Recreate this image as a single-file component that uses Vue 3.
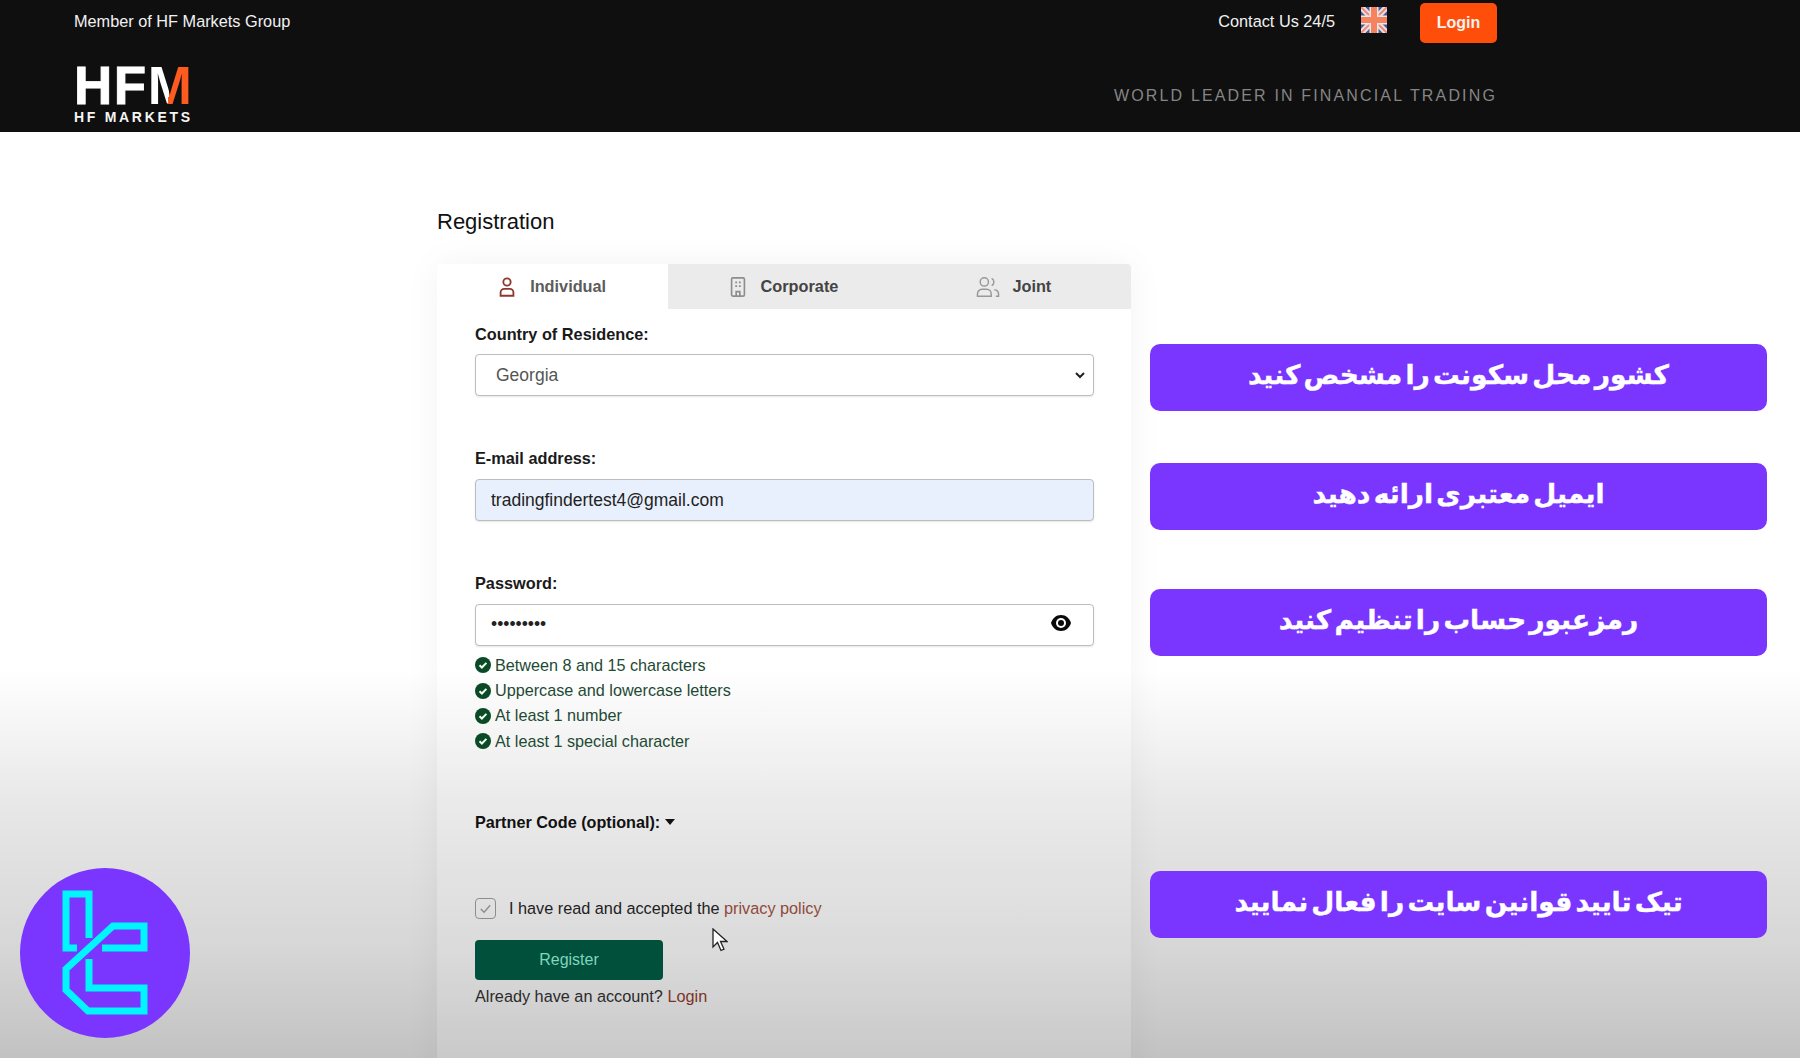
<template>
  <div class="page">
    <header class="topbar">
      <div class="topbar-row">
        <span class="member">Member of HF Markets Group</span>
        <div class="topbar-links">
          <span class="contact">Contact Us 24/5</span>
          <svg class="flag" viewBox="0 0 26 26">
            <rect width="26" height="26" rx="3" fill="#4a5a94" />
            <path d="M0 0L26 26M26 0L0 26" stroke="#e9dfe4" stroke-width="6" />
            <path d="M0 0L26 26M26 0L0 26" stroke="#f08a78" stroke-width="2" />
            <path d="M13 0V26M0 13H26" stroke="#f1e6e4" stroke-width="9" />
            <path d="M13 0V26M0 13H26" stroke="#f5835f" stroke-width="6" />
          </svg>
          <button class="login-btn">Login</button>
        </div>
      </div>
      <div class="topbar-row topbar-row--brand">
        <div class="brand">
          <div class="brand-mark">HF<span class="brand-m">M</span></div>
          <div class="brand-sub">HF MARKETS</div>
        </div>
        <span class="slogan">WORLD LEADER IN FINANCIAL TRADING</span>
      </div>
    </header>

    <main class="content">
      <section class="form-col">
        <h1 class="title">Registration</h1>
        <div class="card">
          <div class="tabs">
            <div class="tab tab--active">
              <svg class="tab-icon" viewBox="0 0 24 24" fill="none" stroke="#8c3a30" stroke-width="2">
                <circle cx="12" cy="6.5" r="4" />
                <path d="M5 21.500v-3.500a4 4 0 0 1 4-4h6a4 4 0 0 1 4 4v3.500z" />
              </svg>
              Individual
            </div>
            <div class="tab">
              <svg class="tab-icon" viewBox="0 0 24 24" fill="none" stroke="#8d8d8d" stroke-width="1.8">
                <rect x="5" y="2" width="14" height="20" rx="1.5" />
                <path d="M9 7h2M13 7h2M9 11h2M13 11h2M10 22v-5h4v5" />
              </svg>
              Corporate
            </div>
            <div class="tab">
              <svg class="tab-icon tab-icon--wide" viewBox="0 0 26 24" fill="none" stroke="#999" stroke-width="1.6">
                <circle cx="9" cy="6.5" r="4.5" />
                <path d="M1.500 22v-2.500a5 5 0 0 1 5-5h5a5 5 0 0 1 5 5V22z" />
                <path d="M17 2.500a4.500 4.500 0 0 1 0 8M20 15a5 5 0 0 1 4.500 4.500V22h-3" />
              </svg>
              Joint
            </div>
          </div>

          <div class="form">
            <div class="field field--first">
              <label class="label">Country of Residence:</label>
              <div class="select-wrap">
                <select class="control control--select">
                  <option>Georgia</option>
                </select>
                <svg class="chevron" viewBox="0 0 10 7" fill="none" stroke="#222" stroke-width="2">
                  <path d="M1 1l4 4 4-4" />
                </svg>
              </div>
            </div>
            <div class="field">
              <label class="label">E-mail address:</label>
              <input class="control control--filled" type="text" value="tradingfindertest4@gmail.com" />
            </div>
            <div class="field field--password">
              <label class="label">Password:</label>
              <div class="password-wrap">
                <input class="control" type="password" value="secret123" />
                <svg class="eye" viewBox="0 0 22 18">
                  <path d="M11 1C6 1 2.500 4.500 1 9c1.500 4.500 5 8 10 8s8.500-3.500 10-8c-1.500-4.500-5-8-10-8z" fill="#0a0a0a" />
                  <circle cx="11" cy="9" r="5" fill="#fff" />
                  <circle cx="11" cy="9" r="3" fill="#0a0a0a" />
                </svg>
              </div>
            </div>

            <ul class="rules">
              <li v-for="rule in rules" :key="rule" class="rule">
                <svg class="rule-icon" viewBox="0 0 16 16">
                  <circle cx="8" cy="8" r="8" fill="#0b4a26" />
                  <path d="M4.500 8.200l2.400 2.300 4.500-4.600" fill="none" stroke="#f4fff4" stroke-width="2" />
                </svg>
                {{ rule }}
              </li>
            </ul>

            <div class="partner">
              Partner Code (optional):
              <span class="caret"></span>
            </div>

            <label class="accept">
              <span class="checkbox">
                <svg viewBox="0 0 16 16" fill="none" stroke="#8d8d8d" stroke-width="1.500">
                  <path d="M3 8.500l3.500 3.500L13 4.500" />
                </svg>
              </span>
              I have read and accepted the <a class="link link--soft">privacy policy</a>
            </label>

            <button class="register-btn">Register</button>
            <p class="have-account">Already have an account? <a class="link">Login</a></p>
          </div>
        </div>
      </section>

      <aside class="notes">
        <div class="note note--country" dir="rtl">کشور محل سکونت را مشخص کنید</div>
        <div class="note note--email" dir="rtl">ایمیل معتبری ارائه دهید</div>
        <div class="note note--password" dir="rtl">رمزعبور حساب را تنظیم کنید</div>
        <div class="note note--terms" dir="rtl">تیک تایید قوانین سایت را فعال نمایید</div>
      </aside>
    </main>

    <!-- mouse pointer from the recording -->
    <svg class="cursor" viewBox="0 0 16 24">
      <path d="M1 1v18l4.500-4.500 3.500 8 3-1.300-3.500-7.700H15z" fill="#fff" stroke="#222" stroke-width="1.300" />
    </svg>

    <div class="badge">
      <svg viewBox="0 0 170 170">
        <circle cx="85" cy="85" r="85" fill="#7a35ff" />
        <g fill="none" stroke="#00f6ff" stroke-width="7" transform="translate(-20 -18)">
          <path d="M77 98H66V44H89V88" />
          <path d="M102 98H144V76H113L66 119V140L88 161H144V138H89V109" />
        </g>
      </svg>
    </div>
  </div>
</template>

<script setup>
const rules = [
  'Between 8 and 15 characters',
  'Uppercase and lowercase letters',
  'At least 1 number',
  'At least 1 special character',
]
</script>

<style>
html,
body {
  margin: 0;
  background: #fff;
}
</style>

<style scoped>
.page {
  position: relative;
  height: 1058px;
  overflow: hidden;
  font-family: "Liberation Sans", Arial, sans-serif;
  color: #111;
  background: linear-gradient(180deg, #fff 670px, #e8e8e8 800px, #d6d6d6 950px, #c2c2c2 1058px);
}

/* header */
.topbar {
  height: 132px;
  box-sizing: border-box;
  padding: 3px 303px 0 74px;
  background: #0f0f10;
  color: #f1f1f1;
}

.topbar-row {
  display: flex;
  justify-content: space-between;
  align-items: flex-start;
  font-size: 16.300px;
}

.topbar-row--brand {
  align-items: center;
  margin-top: 22px;
}

.member {
  line-height: 36px;
}

.topbar-links {
  display: flex;
  align-items: flex-start;
}

.contact {
  line-height: 36px;
}

.flag {
  width: 26px;
  height: 26px;
  margin: 4px 33px 0 26px;
}

.login-btn {
  width: 77px;
  height: 40px;
  border: none;
  border-radius: 5px;
  background: #ff4e0a;
  color: #f8f3ee;
  font: bold 16px "Liberation Sans", Arial, sans-serif;
}

.brand {
  width: 118px;
}

.brand-mark {
  font-size: 53px;
  font-weight: bold;
  line-height: 42px;
  letter-spacing: 1.500px;
  color: #fff;
  white-space: nowrap;
  -webkit-text-stroke: 0.8px #fff;
}

.brand-m {
  background: linear-gradient(100deg, #fff 50%, #ff5a1f 50%);
  -webkit-background-clip: text;
  background-clip: text;
  color: transparent;
  -webkit-text-stroke: 0;
}

.brand-sub {
  margin-top: 4px;
  font-size: 14px;
  font-weight: bold;
  line-height: 13px;
  letter-spacing: 2.700px;
  color: #f5f5f5;
  white-space: nowrap;
}

.slogan {
  margin-top: 3px;
  font-size: 16px;
  letter-spacing: 2.150px;
  color: #858585;
}

/* main area */
.content {
  display: flex;
  gap: 19px;
  padding-left: 437px;
}

.form-col {
  width: 694px;
  flex: none;
}

.title {
  margin: 77px 0 29px;
  font-size: 22px;
  font-weight: normal;
  line-height: 26px;
}

.card {
  height: 900px;
  border-radius: 4px 4px 0 0;
  background: rgba(255, 255, 255, 0.12);
  box-shadow: 0 0 36px rgba(0, 0, 0, 0.05);
}

.tabs {
  display: grid;
  grid-template-columns: repeat(3, 1fr);
  height: 45px;
  background: #ebebeb;
  border-radius: 4px 4px 0 0;
}

.tab {
  display: flex;
  align-items: center;
  justify-content: center;
  gap: 12px;
  padding-right: 3px;
  font-size: 16.300px;
  font-weight: bold;
  color: #444;
}

.tab--active {
  background: #fff;
  color: #5c5c5c;
}

.tab-icon {
  width: 22px;
  height: 22px;
}

.tab-icon--wide {
  width: 24px;
}

.form {
  padding: 15px 37px 0 38px;
}

.field {
  margin-bottom: 51.500px;
}

.field--first {
  margin-bottom: 52px;
}

.field--first .label {
  margin-bottom: 10px;
}

.field--password {
  margin-bottom: 7px;
}

.label {
  display: block;
  margin-bottom: 11px;
  font-size: 16.300px;
  font-weight: bold;
  line-height: 20px;
  color: #1a1a1a;
}

.control {
  display: block;
  width: 100%;
  height: 42px;
  box-sizing: border-box;
  padding: 0 15px;
  border: 1px solid #bdbdbd;
  border-radius: 4px;
  background: #fff;
  color: #222;
  font: 17.500px "Liberation Sans", Arial, sans-serif;
  box-shadow: 0 1px 2px rgba(0, 0, 0, 0.1);
  outline: none;
}

.control--select {
  padding-left: 20px;
  color: #555;
  appearance: none;
}

.control--filled {
  background: #e8f0fe;
}

.select-wrap,
.password-wrap {
  position: relative;
}

.chevron {
  position: absolute;
  top: 18px;
  right: 9px;
  width: 10px;
  height: 7px;
}

.eye {
  position: absolute;
  top: 10px;
  right: 22px;
  width: 22px;
  height: 18px;
}

.rules {
  margin: 0;
  padding: 0;
  list-style: none;
}

.rule {
  display: flex;
  align-items: center;
  gap: 4px;
  height: 25.400px;
  font-size: 16.200px;
  color: #1e4a34;
}

.rule-icon {
  width: 16px;
  height: 16px;
  flex: none;
}

.partner {
  display: flex;
  align-items: center;
  gap: 5px;
  margin-top: 58.400px;
  font-size: 16.200px;
  font-weight: bold;
  line-height: 20px;
}

.caret {
  width: 0;
  height: 0;
  border-left: 5.500px solid transparent;
  border-right: 5.500px solid transparent;
  border-top: 6px solid #111;
}

.accept {
  display: flex;
  align-items: center;
  margin-top: 65px;
  font-size: 16.250px;
  line-height: 22px;
  color: #222;
  white-space: pre;
}

.checkbox {
  display: flex;
  align-items: center;
  justify-content: center;
  width: 21px;
  height: 21px;
  box-sizing: border-box;
  margin-right: 8.500px;
  border: 1px solid #8d8d8d;
  border-radius: 4px;
}

.checkbox svg {
  width: 15px;
  height: 15px;
}

.link {
  color: #7a3328;
}

.link--soft {
  color: #8f4a3c;
}

.register-btn {
  display: block;
  width: 188px;
  height: 40px;
  margin-top: 21px;
  border: none;
  border-radius: 4px;
  background: #00503c;
  color: #7fd6bb;
  font: 16px "Liberation Sans", Arial, sans-serif;
}

.have-account {
  margin: 6px 0 0;
  font-size: 16.250px;
  line-height: 20px;
  color: #2b2b2b;
}

/* persian callouts */
.notes {
  width: 617px;
  flex: none;
  padding-top: 212px;
}

.note {
  display: flex;
  align-items: center;
  justify-content: center;
  height: 67px;
  padding-bottom: 6px;
  box-sizing: border-box;
  border-radius: 10px;
  background: #7a35ff;
  color: #fff;
  font: bold 26.500px "DejaVu Sans", sans-serif;
  word-spacing: -6px;
  -webkit-text-stroke: 0.4px #fff;
}

.note--email {
  margin-top: 52px;
}

.note--password {
  margin-top: 59px;
}

.note--terms {
  margin-top: 215px;
}

/* overlays */
.cursor {
  position: absolute;
  left: 712px;
  top: 928px;
  width: 16px;
  height: 24px;
}

.badge {
  position: absolute;
  left: 20px;
  top: 868px;
  width: 170px;
  height: 170px;
}

.badge svg {
  display: block;
}
</style>
